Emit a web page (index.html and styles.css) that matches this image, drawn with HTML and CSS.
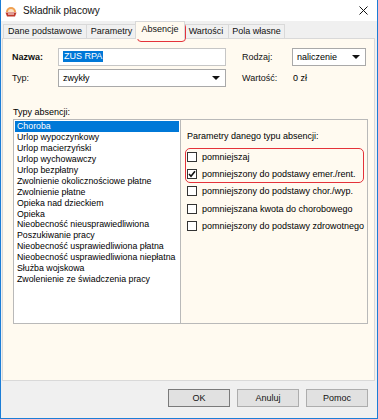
FILE: index.html
```html
<!DOCTYPE html>
<html lang="pl">
<head>
    <meta charset="UTF-8">
    <title>Składnik płacowy</title>
    <link rel="stylesheet" href="styles.css">
</head>
<body>
    <div class="window">
        <div class="titlebar">
            <svg class="app-icon" width="12" height="11" viewBox="0 0 12 11">
                <path d="M1 6 A5 5 0 0 1 11 6 Z" fill="#f0a050"/>
                <path d="M3 6 A3 3 0 0 1 9 6 Z" fill="#fbe3c4"/>
                <path d="M0.5 6.5 H11.5 L10 10.5 H2 Z" fill="#c0392b"/>
                <rect x="3" y="7.5" width="6" height="1" fill="#fff"/>
            </svg>
            <span class="title">Składnik płacowy</span>
            <svg class="close" width="9" height="9" viewBox="0 0 9 9">
                <path d="M0.5 0.5 L8.5 8.5 M8.5 0.5 L0.5 8.5" stroke="#111" stroke-width="1"/>
            </svg>
        </div>

        <div class="tabs">
            <div class="tab tab-dane">Dane podstawowe</div>
            <div class="tab tab-param">Parametry</div>
            <div class="tab active">Absencje</div>
            <div class="tab tab-wart">Wartości</div>
            <div class="tab tab-pola">Pola własne</div>
        </div>

        <div class="panel">
            <div class="form-grid">
                <label class="bold">Nazwa:</label>
                <div class="field"><span class="selected-text">ZUS RPA</span></div>
                <span></span>
                <label>Rodzaj:</label>
                <div class="field combo">naliczenie<span class="arrow"></span></div>

                <label>Typ:</label>
                <div class="field combo">zwykły<span class="arrow"></span></div>
                <span></span>
                <label>Wartość:</label>
                <div class="value">0 zł</div>
            </div>

            <div class="section-label">Typy absencji:</div>
            <div class="absence-box">
                <ul class="abs-list">
                    <li class="selected">Choroba</li>
                    <li>Urlop wypoczynkowy</li>
                    <li>Urlop macierzyński</li>
                    <li>Urlop wychowawczy</li>
                    <li>Urlop bezpłatny</li>
                    <li>Zwolnienie okolicznościowe płatne</li>
                    <li>Zwolnienie płatne</li>
                    <li>Opieka nad dzieckiem</li>
                    <li>Opieka</li>
                    <li>Nieobecność nieusprawiedliwiona</li>
                    <li>Poszukiwanie pracy</li>
                    <li>Nieobecność usprawiedliwiona płatna</li>
                    <li>Nieobecność usprawiedliwiona niepłatna</li>
                    <li>Służba wojskowa</li>
                    <li>Zwolenienie ze świadczenia pracy</li>
                </ul>
                <div class="params">
                    <div class="params-title">Parametry danego typu absencji:</div>
                    <div class="check-row"><span class="box"></span>pomniejszaj</div>
                    <div class="check-row"><span class="box checked"><svg width="8" height="8" viewBox="0 0 8 8"><path d="M1 4 L3 6.3 L7 1.2" stroke="#111" stroke-width="1.6" fill="none"/></svg></span>pomniejszony do podstawy emer./rent.</div>
                    <div class="check-row"><span class="box"></span>pomniejszony do podstawy chor./wyp.</div>
                    <div class="check-row"><span class="box"></span>pomniejszana kwota do chorobowego</div>
                    <div class="check-row"><span class="box"></span>pomniejszony do podstawy zdrowotnego</div>
                    <div class="mark mark-checks"></div>
                </div>
            </div>
        </div>

        <div class="footer">
            <button class="btn default">OK</button>
            <button class="btn">Anuluj</button>
            <button class="btn">Pomoc</button>
        </div>

        <div class="mark mark-tab"></div>
    </div>
</body>
</html>
```

FILE: styles.css
```css
/* Reset */
* {
    margin: 0;
    padding: 0;
    box-sizing: border-box;
}

body {
    font-family: 'Liberation Sans', Arial, sans-serif;
    font-size: 9px;
    color: #000;
    background: #fff;
}

/* Window frame */
.window {
    position: relative;
    width: 378px;
    height: 419px;
    border: 1px solid #1c7dd6;
    border-top: none;
    background: #f0f0f0;
    display: flex;
    flex-direction: column;
}

.titlebar {
    height: 21px;
    background: #fff;
    display: flex;
    align-items: center;
    padding-left: 4px;
}

.app-icon {
    margin-top: 2px;
}

.title {
    margin-left: 6px;
    font-size: 10px;
    color: #111;
}

.close {
    margin-left: auto;
    margin-right: 9px;
}

/* Tabs */
.tabs {
    height: 17px;
    display: flex;
    align-items: flex-end;
    padding-left: 2px;
}

.tab {
    height: 14px;
    line-height: 12px;
    text-align: center;
    border: 1px solid #d9d9d9;
    border-bottom: none;
    background: #f0f0f0;
    color: #111;
    white-space: nowrap;
}

.tab-dane { width: 84px; }
.tab-param { width: 51px; margin-left: -1px; }
.tab-wart { width: 46px; }
.tab-pola { width: 57px; margin-left: -1px; }

.tab.active {
    position: relative;
    z-index: 1;
    width: 50px;
    height: 18px;
    line-height: 15px;
    margin: 0 -2px -1px -2px;
    background: #fffaf0;
}

/* Main panel */
.panel {
    height: 343px;
    margin: 0 2px 0 1px;
    border: 1px solid #d9d9d9;
    background: #fffaf0;
    padding: 9px 7px 0 9px;
}

.form-grid {
    display: grid;
    grid-template-columns: 46px 168px 16px 50px 74px;
    grid-auto-rows: 18px;
    row-gap: 3px;
    align-items: center;
}

.form-grid label {
    color: #111;
}

.bold {
    font-weight: bold;
}

.field {
    position: relative;
    height: 18px;
    background: #fff;
    border: 1px solid #c6c6c6;
    padding: 0 4px;
    line-height: 16px;
}

.selected-text {
    display: inline-block;
    background: #0078d7;
    color: #fff;
    line-height: 11px;
    padding: 0 1px;
    vertical-align: middle;
    margin-top: -2px;
}

.combo {
    border-color: #a9a9a9;
}

.arrow {
    position: absolute;
    right: 5px;
    top: 6px;
    border-left: 4px solid transparent;
    border-right: 4px solid transparent;
    border-top: 4px solid #111;
}

.value {
    padding-left: 1px;
}

.section-label {
    margin-top: 20px;
    padding-left: 1px;
    line-height: 11px;
}

/* Absence list and parameters */
.absence-box {
    margin-top: 1px;
    margin-left: 1px;
    height: 205px;
    width: 355px;
    display: flex;
}

.abs-list {
    list-style: none;
    width: 168px;
    background: #fff;
    border: 1px solid #b9b9b9;
    padding: 1px;
    font-size: 8.8px;
}

.abs-list li {
    height: 10.95px;
    line-height: 10.95px;
    padding-left: 2px;
    white-space: nowrap;
}

.abs-list li.selected {
    background: #0078d7;
    color: #fff;
}

.params {
    position: relative;
    flex: 1;
    border: 1px solid #b9b9b9;
    border-left: none;
    padding: 11px 0 0 6px;
}

.params-title {
    line-height: 11px;
    margin-bottom: 6px;
}

.check-row {
    height: 17.4px;
    display: flex;
    align-items: center;
    white-space: nowrap;
}

.box {
    width: 10px;
    height: 10px;
    border: 1px solid #333;
    background: #fff;
    margin-right: 5px;
    display: flex;
    align-items: center;
    justify-content: center;
}

/* Red annotation outlines */
.mark {
    position: absolute;
    border: 1.5px solid #e4323a;
    border-radius: 4px;
}

.mark-tab {
    left: 136px;
    top: 23px;
    width: 49px;
    height: 19px;
}

.mark-checks {
    left: 4px;
    top: 28px;
    width: 179px;
    height: 35px;
    border-radius: 5px;
}

/* Footer buttons */
.footer {
    flex: 1;
    display: flex;
    justify-content: flex-end;
    gap: 7px;
    padding: 8px 9px 0 0;
}

.btn {
    width: 62px;
    height: 18px;
    font-family: inherit;
    font-size: 9px;
    color: #111;
    background: #e1e1e1;
    border: 1px solid #adadad;
}

.btn.default {
    border-color: #7a7a7a;
}
```
